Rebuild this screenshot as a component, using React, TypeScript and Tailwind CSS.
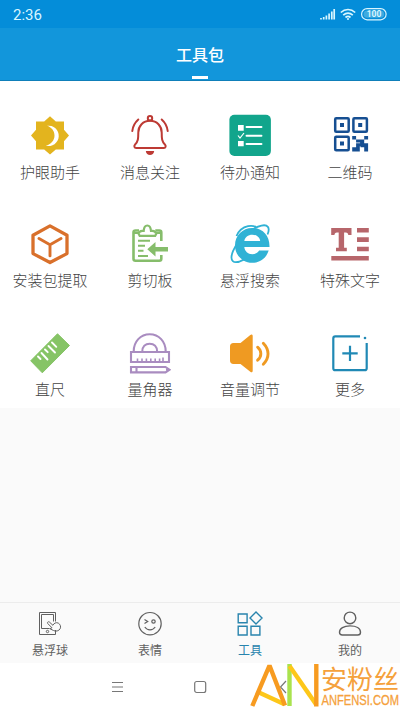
import type { ReactNode } from 'react'

interface Item {
  label: string
  icon: ReactNode
}

const EyeIcon = () => (
  <g>
    <path fill="#e3b41e" d="M6 6.500h8.200L20 1.200l5.800 5.300H34v8.200l5 5.800-5 5.800v8.200h-8.200L20 39.500l-5.800-5H6v-8.200L1 20.500l5-5.800z" />
    <path fill="#fff" d="M17 10.800a10.200 10.200 0 1 1-1.200 19.900c5-1.200 8.700-5 8.700-10.200 0-4.800-3.200-8.300-7.500-9.700z" />
  </g>
)

const BellIcon = () => (
  <g fill="none" stroke="#bd3a34" strokeWidth="2" strokeLinecap="round">
    <circle cx="20" cy="3.300" r="2.200" />
    <path d="M20 5.800c-7 0-11.700 5.200-11.700 11.700 0 6.500-.3 9-3 11.700-1.700 1.700-1 3.800.9 3.800h27.600c1.900 0 2.600-2.100.9-3.800-2.700-2.700-3-5.200-3-11.700C31.700 11 27 5.800 20 5.800z" />
    <path d="M8.300 4.500C5 7.500 2.800 11 2.300 16M31.700 4.500c3.300 3 5.500 6.500 6 11.500" />
    <path fill="#bd3a34" stroke="none" d="M15.800 36h8.400c-.3 2.800-2 4-4.200 4s-3.900-1.200-4.200-4z" />
  </g>
)

const TodoIcon = () => (
  <g>
    <rect x="-.6" y="-.3" width="41.500" height="41.200" rx="5" fill="#12a58c" />
    <path fill="#fff" d="M8 10h5.700v5.700H8zM8 26h5.700v5.300H8z" />
    <path d="M8 20.500l2 2.500 4-5" fill="none" stroke="#fff" strokeWidth="1.200" />
    <path d="M16.500 12h15M16.500 20.700h15M16.500 29h15" stroke="#fff" strokeWidth="1.900" strokeLinecap="round" />
  </g>
)

const QrIcon = () => (
  <g fill="#164f92">
    <g fill="none" stroke="#164f92" strokeWidth="2.500">
      <rect x="5.200" y="3.200" width="13.500" height="13.500" rx="1" />
      <rect x="23.400" y="3.200" width="13.500" height="13.500" rx="1" />
      <rect x="5.200" y="21.700" width="13.500" height="13.500" rx="1" />
    </g>
    <path d="M10 8h4v4h-4zM28.200 8h4v4h-4zM10 26.500h4v4h-4z" />
    <path d="M22.200 21h3.900v3.500h-3.900zM34.200 21h3.900v3.500h-3.900zM26.100 24.500h8.100v3.700h3.900v8.300h-3.900v-4.200h-3.700v-1h-.7v5.200h-7.600v-4.200h3.900v-4.100h4v-.8h-4z" />
  </g>
)

const PackageIcon = () => (
  <g fill="none" stroke="#d9702b" strokeWidth="3.300" strokeLinejoin="round" strokeLinecap="round">
    <path d="M20 1.900l17 9.300v18.400l-17 8.900-17-8.900V11.200z" />
    <path strokeWidth="2.900" d="M9 14.500l11 6.200 11-6.200M20 20.700v11.200" />
  </g>
)

const ClipboardIcon = () => (
  <g fill="none" stroke="#86bd6b" strokeWidth="2.600">
    <path d="M31.300 17V8.500c0-1.300-.8-2-2-2h-4M9 6.500H5.500c-1.300 0-2 .7-2 2v26.300c0 1.300.7 2 2 2h23.800c1.200 0 2-.7 2-2V31" />
    <path d="M3.500 9h4.700l1.500 2.800h15.500L26.700 9h4.600" strokeWidth="2.200" />
    <path d="M8.900 9.500c0-1.800 1-2.500 3.500-2.700h1.300C14 3 14.800 1.500 17.300 1.500S20.600 3 21 6.800h1.300c2.500.2 3.500.9 3.500 2.700" strokeWidth="2.200" />
    <path d="M8 16.800h12M8 21.800h7M8 26.800h5.500M8 32h10" strokeWidth="2" />
    <path stroke="none" fill="#86bd6b" d="M17.300 25.300l8.200-7.200v4.900H38v4.600H25.500v4.900z" />
  </g>
)

const BrowserIcon = () => (
  <g fill="#30b2d5">
    <path fillRule="evenodd" d="M22.300 4c10 0 17.500 7.400 17.200 19H14.300c.4 4.200 3.600 7.200 8 7.200 3.200 0 5.500-1.300 6.800-3.600h9.600c-2.400 7.600-8.600 12.200-16.300 12.200-9.800 0-17.400-7.600-17.400-17.400S12.500 4 22.300 4zM14.300 17h15.900c-.4-3.600-3.600-6.300-7.900-6.300s-7.500 2.700-8 6.300z" />
    <path fill="none" stroke="#30b2d5" strokeWidth="1.800" d="M37.500 10.500C40.500 3.500 37.500.2 31.500 1.600 21.500 3.800 8 15 3 27.200c-3.800 9.400-.3 14.300 10.800 8.400M6.500 12C8.200 8 12 3.500 18 2.200c3-.6 6-.2 8 .8" />
  </g>
)

const TextIcon = () => (
  <path
    fill="#b7666b"
    d="M1.200 4h20.300v7h-3.200c-.2-1.700-.8-2.600-2.600-2.600h-1.600v15.300h2.700v3.600H6v-3.600h2.700V8.400H7C5.200 8.400 4.600 9.300 4.400 11H1.200zM27 4h11.800v4.500H27zM27 13.300h11.800V18H27zM27 22.700h11.800v4.600H27zM1.300 32h37.500v4.600H1.300z"
  />
)

const RulerIcon = () => (
  <g>
    <path fill="#86c466" stroke="#86c466" strokeLinejoin="round" d="M27.500.8L39.500 12.500 12.300 39.800.7 27.800z" />
    <path stroke="#fff" strokeWidth="1.900" strokeLinecap="round" d="M8 23.500l2.500 2.500M11.500 20l6 6.500M15 16.500l2.700 2.700M18.500 13l6.500 6.500M22 9.500l4.300 4.300" fill="none" />
  </g>
)

const ProtractorIcon = () => (
  <g fill="none" stroke="#a98cc0" strokeWidth="2.100">
    <path d="M3.700 18.500C3.700 8.500 10.500 1.300 19.700 1.300s16 7.200 16 17.200" />
    <path d="M12.300 18.500c0-4.700 3-7.800 7.400-7.800s7.400 3.100 7.400 7.800" />
    <path d="M1 19h38v10H1zM1 34h34.500l4 2.700-4 2.700H1zM6.500 34v5.400" />
    <path d="M7.500 28.500v-3M12 28.500v-3M16.400 28.500v-3M20.800 28.500v-3M25.200 28.500v-3M29.600 28.500v-3M33 28.500v-4" strokeWidth="1.600" />
    <path d="M36 36.700h3" />
  </g>
)

const VolumeIcon = () => (
  <g fill="#ef9a22">
    <path d="M3.500 10h7L20.300 1.900c1.300-1 2.400-.5 2.400 1v34.800c0 1.500-1.100 2-2.400 1L10.500 31h-7C1.200 31 0 29.700 0 27.500v-14C0 11.300 1.200 10 3.500 10z" />
    <path fill="none" stroke="#ef9a22" strokeWidth="2.900" strokeLinecap="round" d="M27.600 14.200c4.300 3.700 4.300 9.300 0 13M33.300 10.200c6.300 6.500 6.300 14.900 0 21" />
  </g>
)

const MoreIcon = () => (
  <g fill="none" stroke="#2089b5" strokeWidth="2.200">
    <path d="M30 3.400H5.300c-1.300 0-2 .7-2 2v29.800c0 1.300.7 2 2 2h29.400c1.300 0 2-.7 2-2V10" />
    <path d="M12.300 20.300h15.400M20 12.700V28" />
    <circle cx="35" cy="5" r="1.300" fill="#2089b5" stroke="none" />
  </g>
)

const tools: Item[] = [
  { label: '护眼助手', icon: <EyeIcon /> },
  { label: '消息关注', icon: <BellIcon /> },
  { label: '待办通知', icon: <TodoIcon /> },
  { label: '二维码', icon: <QrIcon /> },
  { label: '安装包提取', icon: <PackageIcon /> },
  { label: '剪切板', icon: <ClipboardIcon /> },
  { label: '悬浮搜索', icon: <BrowserIcon /> },
  { label: '特殊文字', icon: <TextIcon /> },
  { label: '直尺', icon: <RulerIcon /> },
  { label: '量角器', icon: <ProtractorIcon /> },
  { label: '音量调节', icon: <VolumeIcon /> },
  { label: '更多', icon: <MoreIcon /> },
]

const tabs: Item[] = [
  {
    label: '悬浮球',
    icon: (
      <g strokeWidth="1">
        <path d="M17.500 19v4.500h-16v-22h16v9M3.500 17.500v-14h12v7M3.500 17.500h8" />
        <circle cx="9.500" cy="20.500" r="1.200" />
        <path d="M9.700 11.200c.8-.8 1.500-.4 2.200.3l3 2.800c.8-2 3.300-3.300 5.400-2.200 2 1.200 2.900 3.600 1.800 5.700-1.200 2.200-4.400 3-6.600 1.700l-3.700-1.800 2.200-.9-4-4c-.6-.6-.8-1.100-.3-1.600z" />
      </g>
    ),
  },
  {
    label: '表情',
    icon: (
      <g strokeWidth="1.200">
        <circle cx="12" cy="12.700" r="11.200" />
        <path d="M6.500 8.500l3.200 2-3.200 2M6.800 16c2.500 3.800 7.900 3.800 10.400 0" />
        <circle cx="15.500" cy="10.500" r="1.700" />
      </g>
    ),
  },
  {
    label: '工具',
    icon: (
      <g strokeWidth="1.400">
        <path d="M.2 3h8.900v8.700H.2zM.2 15.300h8.900V24H.2zM13 15.300h8.900V24H13zM18 1.100l6 6-6 6-6-6z" />
      </g>
    ),
  },
  {
    label: '我的',
    icon: (
      <g strokeWidth="1.400">
        <circle cx="12" cy="6.900" r="5.800" />
        <path d="M1.500 21.200c0-4 4.400-6.300 10.500-6.300s10.500 2.300 10.500 6.300c0 2-.9 2.800-2.800 2.800H4.300c-1.900 0-2.800-.8-2.800-2.800z" />
      </g>
    ),
  },
]

const StatusBar = () => (
  <div className="flex h-7 items-center justify-between bg-[#048dd9] px-[13px] text-[#d9f6ff]">
    <span className="pt-0.5 font-[Roboto] text-[15px] leading-none">2:36</span>
    <svg width="68" height="14" viewBox="0 0 68 14" fill="none" stroke="currentColor">
      <path strokeWidth="1.700" d="M2 11v1.500M4.700 10v2.500M7.400 8.500v4M10.100 6.500v6M12.800 4.500v8M15.200 2v10.500" />
      <g strokeWidth="1.700">
        <path d="M21.800 5.500c4.200-4 10.200-4 14.400 0M24.200 8.200c2.900-2.600 6.700-2.600 9.600 0M26.500 10.500c1.600-1.300 3.400-1.300 5 0" />
      </g>
      <circle cx="29" cy="12" r="1" fill="currentColor" stroke="none" />
      <rect x="42.600" y="1.600" width="24.500" height="11.200" rx="5.500" strokeWidth="1.200" />
      <rect x="44.600" y="3.600" width="20.500" height="7.200" rx="3.600" fill="#3fabdf" stroke="none" />
      <text x="55" y="10.200" textAnchor="middle" fill="currentColor" stroke="none" className="font-[Roboto] text-[8.500px] font-bold">100</text>
    </svg>
  </div>
)

const Watermark = () => (
  <svg className="absolute bottom-0 right-0 overflow-visible" width="150" height="50" viewBox="0 0 150 50">
    <g strokeWidth="4.400" fill="none">
      <path stroke="#fdc719" d="M9 31.500l25 11.500" />
      <path stroke="#f79b20" d="M2.300 45L19.500 4.500L35 44.500" strokeLinejoin="bevel" />
      <path stroke="#a9e34e" d="M39.500 45V3" />
      <path stroke="#fdc719" d="M39.500 5L66.500 44" />
      <path stroke="#f79b20" d="M66.300 3v42.500" />
    </g>
    <g fill="#f5a13c">
      <text x="71" y="27.500" textLength="78" lengthAdjust="spacingAndGlyphs" className="font-['Noto_Sans_CJK_SC',sans-serif] text-[26px]">安粉丝</text>
      <text x="71.500" y="44" textLength="77.500" lengthAdjust="spacingAndGlyphs" stroke="#f5a13c" strokeWidth=".3" className="font-['Liberation_Sans',sans-serif] text-[15px]">ANFENSI.COM</text>
    </g>
  </svg>
)

const App = () => {
  return (
    <div className="relative flex h-[711px] w-[400px] flex-col overflow-hidden bg-[#fafafa] font-['Noto_Sans_CJK_SC',sans-serif]">
      <StatusBar />

      {/* Title */}
      <header className="flex h-[53px] flex-col items-center justify-between border-b border-[#0f7fb9] bg-[#1296db] pb-px text-white">
        <h1 className="pt-3.5 text-base font-medium leading-6">工具包</h1>
        <span className="h-[3px] w-4 bg-white" />
      </header>

      {/* Tool grid */}
      <main className="grid h-[327px] grid-cols-4 content-start bg-white pt-[33px]">
        {tools.map((tool, i) => (
          <div key={tool.label} className="flex h-[109px] flex-col items-center">
            <svg width="42" height="42" viewBox="-1 -1 42 42">{tool.icon}</svg>
            <span
              className={`whitespace-nowrap text-[15px] font-light leading-[22px] text-[#444] ${i < 4 ? 'mt-[5px]' : 'mt-1'}`}
            >
              {tool.label}
            </span>
          </div>
        ))}
      </main>

      {/* Tabs */}
      <nav className="mt-auto grid h-[61px] grid-cols-4 border-t border-[#ececec] pt-2">
        {tabs.map((tab) => (
          <div
            key={tab.label}
            className={`flex flex-col items-center ${tab.label === '工具' ? 'text-[#2884ad]' : 'text-[#606060]'}`}
          >
            <svg className="overflow-visible" width="24" height="25" viewBox="0 0 24 25" fill="none" stroke="currentColor">
              {tab.icon}
            </svg>
            <span className="mt-[5px] text-xs leading-[18px]">{tab.label}</span>
          </div>
        ))}
      </nav>

      {/* System keys */}
      <div className="flex h-12 items-center justify-center gap-[70px] bg-white text-[#777]">
        <svg width="13" height="14" viewBox="0 0 13 14" fill="none" stroke="currentColor" strokeWidth="1.200">
          <path d="M1 2.500h11M1 7h11M1 11.500h11" />
        </svg>
        <svg width="13" height="14" viewBox="0 0 13 14" fill="none" stroke="currentColor" strokeWidth="1.200">
          <rect x=".7" y="1.500" width="11" height="11" rx="2" />
        </svg>
        <svg width="13" height="14" viewBox="0 0 13 14" fill="none" stroke="currentColor" strokeWidth="1.200">
          <path d="M9 1L3.500 7L9 13" />
        </svg>
      </div>

      <Watermark />
    </div>
  )
}

export default App
